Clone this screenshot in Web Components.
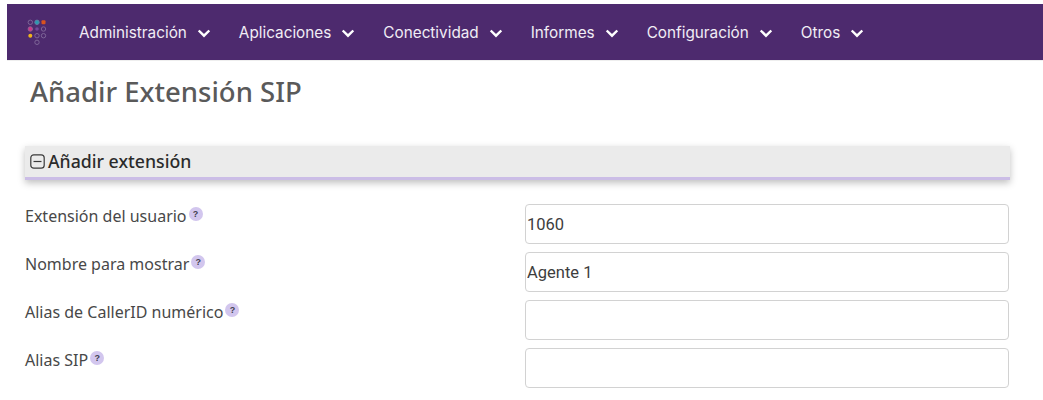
<!DOCTYPE html>
<html lang="es">
<head>
<meta charset="utf-8">
<title>Añadir Extensión SIP</title>
<style>
  html, body { margin: 0; background: #fff; overflow: hidden; }
  body { padding: 4px 0 0 7px; height: 396px; box-sizing: border-box; }
</style>
</head>
<body>
<app-nav>
  <nav-item>Administración</nav-item>
  <nav-item>Aplicaciones</nav-item>
  <nav-item>Conectividad</nav-item>
  <nav-item>Informes</nav-item>
  <nav-item>Configuración</nav-item>
  <nav-item>Otros</nav-item>
</app-nav>
<page-title>Añadir Extensión SIP</page-title>
<form-section heading="Añadir extensión">
  <form-row label="Extensión del usuario" value="1060"></form-row>
  <form-row label="Nombre para mostrar" value="Agente 1"></form-row>
  <form-row label="Alias de CallerID numérico"></form-row>
  <form-row label="Alias SIP"></form-row>
</form-section>
<script>
class AppNav extends HTMLElement {
  constructor() {
    super();
    this.attachShadow({ mode: "open" });
    this.shadowRoot.innerHTML = `
      <style>
        :host {
          display: flex;
          align-items: center;
          height: 56px;
          background: #4d2a6e;
          box-shadow: 0 1px 0 #eee;
          padding-left: 20px;
          gap: 32px;
        }
        svg { display: block; margin-top: 1px; }
        .items { display: flex; gap: 28px; }
      </style>
      <svg width="20" height="28" viewBox="0 0 20 28" fill="none" stroke="#7d6597" stroke-width="1">
        <circle cx="3.3" cy="3.3" r="2.2"/>
        <circle cx="10" cy="3.3" r="2.2" fill="#2a9bb0" stroke="#5f7fa5"/>
        <rect x="14.5" y="1.3" width="4" height="4" rx="1" fill="#d9531e" stroke="none"/>
        <circle cx="3.3" cy="10" r="2.2" fill="#d0358a" stroke="#96608f"/>
        <circle cx="10" cy="10" r="1.8" fill="#72489a" stroke="none"/>
        <circle cx="16.5" cy="10" r="2.2"/>
        <circle cx="3.3" cy="16.7" r="2" fill="#f0b41c" stroke="none"/>
        <circle cx="10" cy="16.7" r="2.2"/>
        <circle cx="16.5" cy="16.7" r="2.2"/>
        <circle cx="10" cy="23.3" r="2.2"/>
      </svg>
      <div class="items"><slot></slot></div>
    `;
  }
}

class NavItem extends HTMLElement {
  constructor() {
    super();
    this.attachShadow({ mode: "open" });
    this.shadowRoot.innerHTML = `
      <style>
        :host {
          display: inline-flex;
          align-items: center;
          gap: 10px;
          font: 400 15.3px Inter, "Liberation Sans", sans-serif;
          color: #f1edf5;
        }
        svg { display: block; margin-top: 2px; }
      </style>
      <slot></slot>
      <svg width="14" height="9" viewBox="0 0 14 9" fill="none" stroke="#fff" stroke-width="2.4">
        <path d="M1.7 1.5 7 6.7 12.3 1.5"/>
      </svg>
    `;
  }
}

class PageTitle extends HTMLElement {
  constructor() {
    super();
    this.attachShadow({ mode: "open" });
    this.shadowRoot.innerHTML = `
      <style>
        :host {
          display: block;
          padding: 13px 0 0 23px;
          height: 77px;
          box-sizing: border-box;
          font: 500 27.5px/38px "Noto Sans", "Open Sans", sans-serif;
          color: #5a5a5a;
        }
      </style>
      <slot></slot>
    `;
  }
}

class FormSection extends HTMLElement {
  constructor() {
    super();
    this.attachShadow({ mode: "open" });
    this.shadowRoot.innerHTML = `
      <style>
        :host {
          display: block;
          width: 985px;
          margin: 9px 0 0 18px;
        }
        .head {
          display: flex;
          align-items: center;
          gap: 3px;
          height: 34px;
          box-sizing: border-box;
          padding: 0 0 1px 5px;
          background: #ebebeb;
          border-bottom: 3px solid #cbbde6;
          box-shadow: 0 3px 7px rgba(0, 0, 0, 0.25);
          font: 500 17.7px "Noto Sans", "Open Sans", sans-serif;
          color: #2b2b2b;
        }
        svg { display: block; }
        .rows { display: flex; flex-direction: column; gap: 8px; margin-top: 24px; }
      </style>
      <div class="head">
        <svg width="15" height="15" viewBox="0 0 15 15" fill="none" stroke="#3a3a3a" stroke-width="1.2">
          <rect x="0.8" y="0.8" width="13.4" height="13.4" rx="3"/>
          <path d="M3.5 7.5H11.5"/>
        </svg>
        <span id="heading"></span>
      </div>
      <div class="rows"><slot></slot></div>
    `;
  }

  connectedCallback() {
    this.shadowRoot.getElementById("heading").textContent = this.getAttribute("heading") || "";
  }
}

class FormRow extends HTMLElement {
  constructor() {
    super();
    this.attachShadow({ mode: "open" });
    this.shadowRoot.innerHTML = `
      <style>
        :host {
          display: grid;
          grid-template-columns: 500px 484px;
          height: 40px;
        }
        label {
          display: flex;
          align-items: flex-start;
          gap: 2px;
          font: 400 16px/24px "Noto Sans", "Open Sans", sans-serif;
          color: #484848;
          white-space: nowrap;
        }
        .help {
          width: 14px;
          height: 14px;
          margin-top: 3px;
          border-radius: 50%;
          background: #d2c6ee;
          color: #3f3f4f;
          font: 700 9px/14px "Liberation Sans", sans-serif;
          text-align: center;
        }
        input {
          box-sizing: border-box;
          width: 100%;
          height: 40px;
          margin: 0;
          padding: 0 2px 0 1px;
          background: #fff;
          border: 1px solid #d2d2d2;
          border-radius: 4px;
          outline: none;
          font: 400 16.5px Roboto, "Liberation Sans", sans-serif;
          color: #3d3d3d;
        }
      </style>
      <label><span id="label"></span><span class="help">?</span></label>
      <input id="field" type="text">
    `;
  }

  connectedCallback() {
    this.shadowRoot.getElementById("label").textContent = this.getAttribute("label") || "";
    this.shadowRoot.getElementById("field").value = this.getAttribute("value") || "";
  }
}

customElements.define("app-nav", AppNav);
customElements.define("nav-item", NavItem);
customElements.define("page-title", PageTitle);
customElements.define("form-section", FormSection);
customElements.define("form-row", FormRow);
</script>
</body>
</html>
